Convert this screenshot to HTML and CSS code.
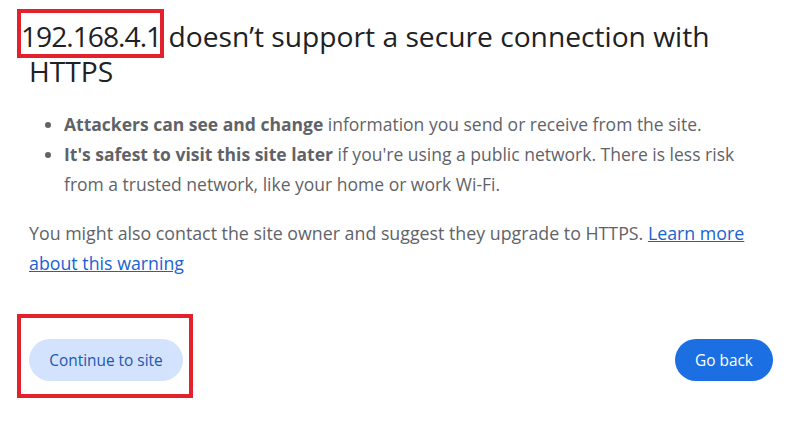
FILE: index.html
```html
<!DOCTYPE html>
<html lang="en">
<head>
<meta charset="utf-8">
<title>Privacy error</title>
<link rel="stylesheet" href="styles.css">
</head>
<body>
<main class="page">
  <h1 class="title"><span class="mark">192.168.4.1</span> doesn’t support a secure connection with HTTPS</h1>
  <ul class="points">
    <li><strong>Attackers can see and change</strong> information you send or receive from the site.</li>
    <li><strong>It's safest to visit this site later</strong> if you're using a public network. There is less risk from a trusted network, like your home or work Wi-Fi.</li>
  </ul>
  <p class="note">You might also contact the site owner and suggest they upgrade to HTTPS. <a href="#" class="link">Learn more about this warning</a></p>
  <div class="actions">
    <div class="mark-wrap">
      <button class="btn btn-secondary">Continue to site</button>
    </div>
    <button class="btn btn-primary">Go back</button>
  </div>
</main>
</body>
</html>
```

FILE: styles.css
```css
html, body {
  margin: 0;
  padding: 0;
  background: #ffffff;
  min-height: 100%;
}
html {
  height: 100%;
}
body {
  font-family: "Open Sans", "Noto Sans", sans-serif;
  color: #5f6368;
}
.page {
  padding: 19px 33px 60px 29px;
}
.title {
  margin: 0;
  font-size: 28.2px;
  line-height: 35px;
  font-weight: 400;
  color: #202124;
}
.mark {
  position: relative;
  margin-left: -8px;
  letter-spacing: -1px;
}
.mark::after {
  content: "";
  position: absolute;
  left: -4px;
  right: -3px;
  top: -8px;
  bottom: -3px;
  border: 4px solid #e3202b;
}
.points {
  margin: 20px 0 0 0;
  padding: 0 0 0 35px;
  font-size: 17.5px;
  line-height: 30px;
}
.points strong {
  font-weight: 700;
  color: #5f6368;
}
.note {
  margin: 19px 0 0 0;
  font-size: 17.8px;
  line-height: 30px;
}
.link {
  color: #1a62d0;
  text-decoration: underline;
}
.actions {
  margin-top: 61px;
  display: flex;
  justify-content: space-between;
  align-items: flex-start;
}
.mark-wrap {
  display: flex;
  border: 4px solid #e3202b;
  padding: 21px 6px 13px 8px;
  margin: -25px -10px -17px -12px;
}
.btn {
  font-family: "Open Sans", "Noto Sans", sans-serif;
  font-size: 15.4px;
  height: 42px;
  border: none;
  border-radius: 21px;
  padding: 0;
  cursor: pointer;
}
.btn-secondary {
  background: #d3e3fd;
  color: #2256b0;
  width: 154px;
}
.btn-primary {
  background: #1b6fe3;
  color: #ffffff;
  width: 98px;
}
```
